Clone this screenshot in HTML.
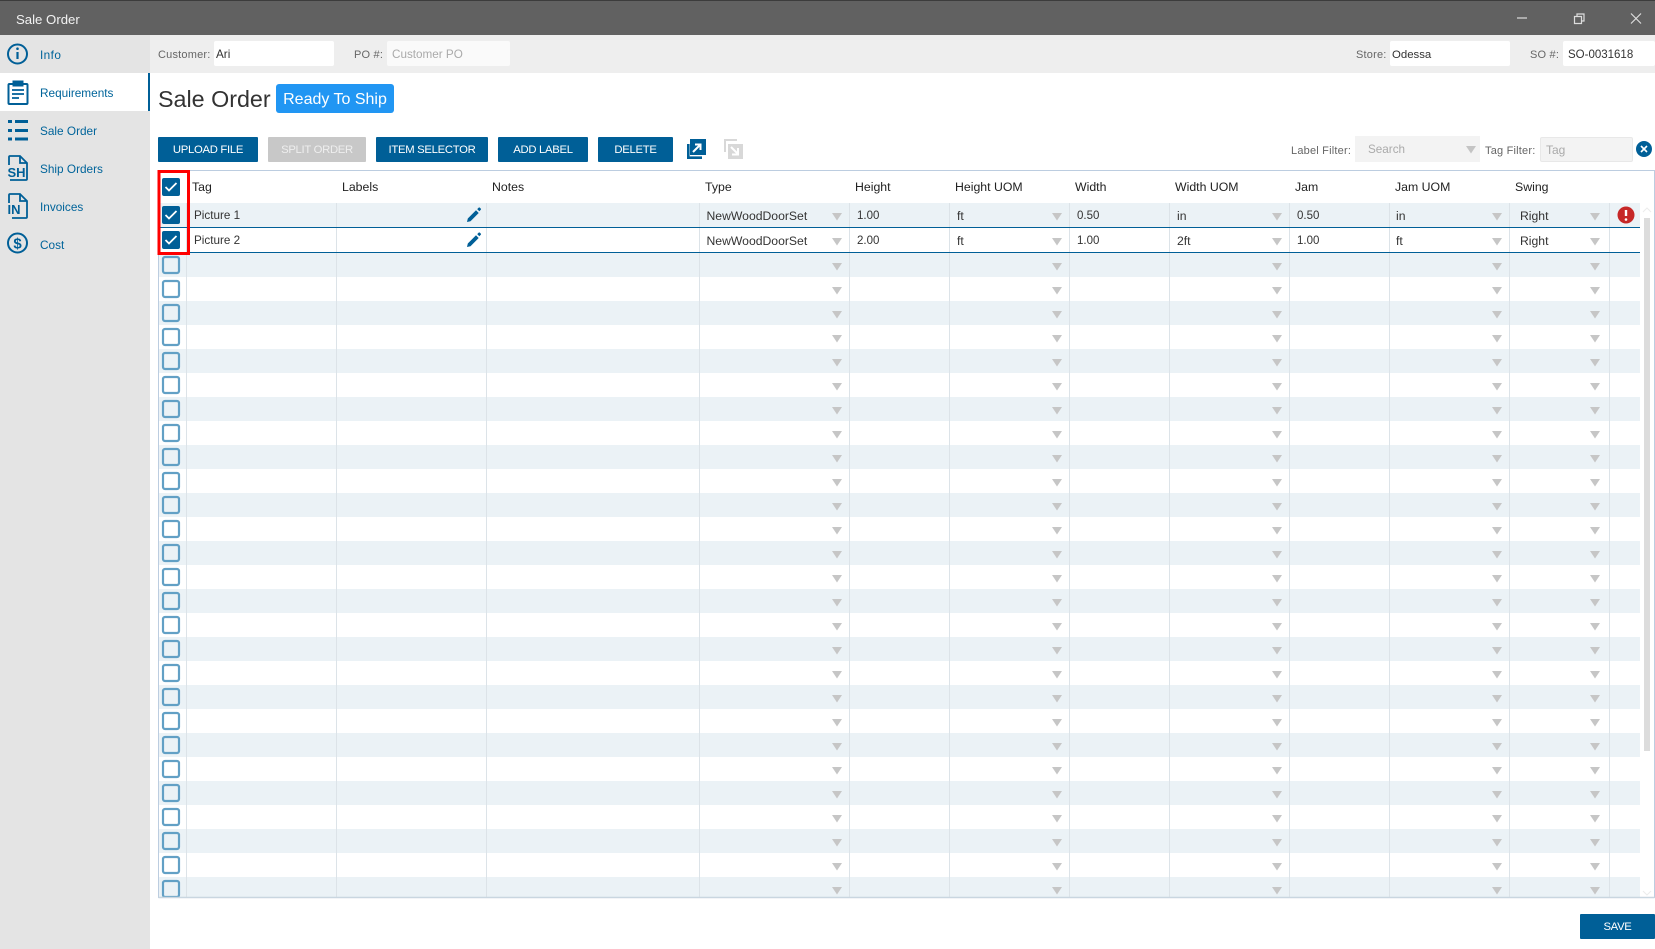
<!DOCTYPE html>
<html>
<head>
<meta charset="utf-8">
<title>Sale Order</title>
<style>
html,body{margin:0;padding:0;background:#fff}
#p{position:relative;width:1655px;height:949px;overflow:hidden;background:#fff;font-family:"Liberation Sans",sans-serif;font-size:12.5px;color:#333}
#p div{position:absolute;box-sizing:border-box}
.t{position:absolute;white-space:nowrap;line-height:16px;height:16px}
.n{left:40px;color:#00649a;font-size:11.8px}
.l{color:#666;font-size:11px;letter-spacing:.2px}
.h{top:179px;color:#222;font-size:12.3px}
.r1{top:208px;color:#333;font-size:12.2px}
.r2{top:233px;color:#333;font-size:12.2px}
.c{font-size:11.7px}
.i{background:#fff;border-radius:2px;height:25px;top:41px}
.b{top:137px;height:25px;background:#005f97;color:#fff;font-size:11.3px;letter-spacing:-.3px;line-height:27px;text-align:center;border-radius:1px}
</style>
</head>
<body>
<div id="p">
<div style="left:0;top:0;width:1655px;height:35px;background:#616161;border-top:1px solid #3c3c3c"></div>
<span class="t" style="left:16px;top:12px;color:#f2f2f2;font-size:13.2px">Sale Order</span>
<svg style="position:absolute;left:1510px;top:8px" width="140" height="20" fill="none" stroke="#ddd" stroke-width="1.2">
<path d="M7 10H17"/>
<path d="M64.500 8.500h7v7h-7z"/><path d="M67 8V6h7v7h-2"/>
<path d="M121 5.500l10 10M131 5.500l-10 10"/>
</svg>
<div style="left:0;top:35px;width:150px;height:914px;background:#e4e4e4"></div>
<div style="left:150px;top:35px;width:1505px;height:38px;background:#eee"></div>
<div style="left:0;top:73px;width:150px;height:38px;background:#fff;border-right:2px solid #005f97"></div>

<svg style="position:absolute;left:0;top:35px" width="40" height="230" fill="none" stroke="#005f97" stroke-width="2">
<circle cx="17.500" cy="19" r="9.500"/><path d="M17.500 17v7" stroke-width="2.200"/><circle cx="17.500" cy="13.700" r="1.300" fill="#005f97" stroke="none"/>
<path d="M13 49H9.500a1 1 0 0 0-1 1v18a1 1 0 0 0 1 1h17a1 1 0 0 0 1-1V50a1 1 0 0 0-1-1H23"/><rect x="13" y="46" width="10" height="5" fill="#005f97" stroke-width="1"/>
<path d="M12 55h12M12 59h12M12 63h7" stroke-width="1.700"/>
<path d="M8 86.500h4M15 86.500h13M8 95.500h4M15 95.500h13M8 104h4M15 104h13" stroke-width="3"/>
<path d="M9 130v-8a1 1 0 0 1 1-1h10l7 7v16a1 1 0 0 1-1 1H10M20 121v7h7" stroke-width="1.800"/>
<path d="M9 168v-8a1 1 0 0 1 1-1h10l7 7v16a1 1 0 0 1-1 1H12M20 159v7h7" stroke-width="1.800"/>
<circle cx="17.500" cy="208" r="9.500"/>
</svg>
<svg style="position:absolute;left:0;top:35px" width="40" height="230">
<text x="7.500" y="142" font-family="Liberation Sans" font-weight="700" font-size="13" fill="#005f97">SH</text>
<text x="7.500" y="179" font-family="Liberation Sans" font-weight="700" font-size="13" fill="#005f97">IN</text>
<text x="17.500" y="213.500" text-anchor="middle" font-family="Liberation Sans" font-size="15" font-weight="700" fill="#005f97">$</text>
</svg>
<span class="t n" style="top:47px;letter-spacing:.4px">Info</span>
<span class="t n" style="top:85px">Requirements</span>
<span class="t n" style="top:123px">Sale Order</span>
<span class="t n" style="top:161px">Ship Orders</span>
<span class="t n" style="top:199px">Invoices</span>
<span class="t n" style="top:237px">Cost</span>

<span class="t l" style="left:158px;top:47px">Customer:</span>
<div class="i" style="left:214px;width:120px"></div>
<span class="t c" style="left:216px;top:47px">Ari</span>
<span class="t l" style="left:354px;top:47px">PO #:</span>
<div class="i" style="left:387px;width:123px;background:#fafafa"></div>
<span class="t c" style="left:392px;top:47px;color:#aaa">Customer PO</span>
<span class="t l" style="left:1356px;top:47px">Store:</span>
<div class="i" style="left:1390px;width:120px"></div>
<span class="t c" style="left:1392px;top:47px;font-size:11.4px">Odessa</span>
<span class="t l" style="left:1530px;top:47px">SO #:</span>
<div class="i" style="left:1563px;width:92px"></div>
<span class="t c" style="left:1568px;top:47px;font-size:11.5px">SO-0031618</span>

<span class="t" style="left:158px;top:85px;height:28px;line-height:28px;font-size:23.300px;color:#333">Sale Order</span>
<div style="left:276px;top:84px;width:118px;height:29px;background:#2196f3;border-radius:3px;color:#fff;font-size:16px;line-height:32px;text-align:center">Ready To Ship</div>

<div class="b" style="left:158px;width:100px">UPLOAD FILE</div>
<div class="b" style="left:268px;width:98px;background:#c8c8c8;color:#eee">SPLIT ORDER</div>
<div class="b" style="left:376px;width:112px">ITEM SELECTOR</div>
<div class="b" style="left:498px;width:90px">ADD LABEL</div>
<div class="b" style="left:598px;width:75px">DELETE</div>
<svg style="position:absolute;left:685px;top:137px" width="64" height="25">
<path d="M5 2h16v16H5z" fill="#005f97"/>
<path d="M8 15l7-7M10 7.500h5.500V13" fill="none" stroke="#fff" stroke-width="2"/>
<path d="M3.300 7v13.700H17" fill="none" stroke="#005f97" stroke-width="2.600"/>
<path d="M39 2h13v2H41v11h-2z" fill="#d8d8d8"/>
<path d="M43 7h15v15H43z" fill="#d8d8d8"/>
<path d="M46 10l7 7M53 11v6.500h-6" fill="none" stroke="#fff" stroke-width="2"/>
</svg>

<span class="t l" style="left:1291px;top:143px">Label Filter:</span>
<div style="left:1355px;top:136px;width:125px;height:26px;background:#f3f3f3"></div>
<span class="t" style="left:1368px;top:142px;color:#aaa;font-size:11.700px">Search</span>
<svg style="position:absolute;left:1465px;top:145px" width="12" height="9"><path d="M1 1h10l-5 7.500z" fill="#c4c4c4"/></svg>
<span class="t l" style="left:1485px;top:143px">Tag Filter:</span>
<div style="left:1540px;top:137px;width:93px;height:25px;background:#f3f3f3;border:1px solid #e8e8e8;border-radius:2px"></div>
<span class="t" style="left:1546px;top:142px;color:#aaa;font-size:12px">Tag</span>
<svg style="position:absolute;left:1635px;top:140px" width="18" height="18"><circle cx="9" cy="9" r="8" fill="#005f97"/><path d="M6 6l6 6M12 6l-6 6" stroke="#fff" stroke-width="1.600"/></svg>

<!-- grid -->
<svg style="position:absolute;left:0;top:0" width="1655" height="949">
<defs>
<pattern id="st" patternUnits="userSpaceOnUse" x="0" y="253" width="1655" height="48">
<rect x="0" y="0" width="1655" height="24" fill="#ebf2f6"/>
</pattern>
<pattern id="ar" patternUnits="userSpaceOnUse" x="0" y="253" width="1655" height="24">
<path d="M832 10h10l-5 7.500zM1052 10h10l-5 7.500zM1272 10h10l-5 7.500zM1492 10h10l-5 7.500zM1590 10h10l-5 7.500z" fill="#c6c6c6"/>
</pattern>
<pattern id="cb" patternUnits="userSpaceOnUse" x="0" y="253" width="200" height="24">
<rect x="163" y="4" width="16" height="16" rx="2" fill="none" stroke="#62a0c5" stroke-width="2.200"/>
</pattern>
</defs>
<rect x="159" y="203" width="1481" height="25" fill="#ebf2f6"/>
<rect x="159" y="253" width="1481" height="644" fill="url(#st)"/>
<path d="M186.500 203V897M336.500 203V897M486.500 203V897M699.500 203V897M849.500 203V897M949.500 203V897M1069.500 203V897M1169.500 203V897M1289.500 203V897M1389.500 203V897M1509.500 203V897M1609.500 203V897" stroke="#dce3e8" stroke-width="1"/>
<path d="M158 227.500H1640M158 252.500H1640" stroke="#005f97" stroke-width="1"/>
<rect x="0" y="253" width="1655" height="644" fill="url(#ar)"/>
<path d="M832 213h10l-5 7.500zM1052 213h10l-5 7.500zM1272 213h10l-5 7.500zM1492 213h10l-5 7.500zM1590 213h10l-5 7.500zM832 238h10l-5 7.500zM1052 238h10l-5 7.500zM1272 238h10l-5 7.500zM1492 238h10l-5 7.500zM1590 238h10l-5 7.500z" fill="#c6c6c6"/>
<rect x="0" y="253" width="200" height="644" fill="url(#cb)"/>
<path d="M158.500 170.500H1654.500V897.500H158.500z" fill="none" stroke="#bccde0" stroke-width="1"/>
<path d="M158.500 897.500H1654.500" stroke="#c9d6e0" stroke-width="1.500"/>
<rect x="1644" y="218" width="6" height="533" fill="#dcdcdc"/>
<path d="M1643 212l4-4 4 4M1643 891l4 4 4-4" fill="none" stroke="#ececec" stroke-width="1"/>
<rect x="162" y="178" width="18" height="18" rx="2" fill="#005f97"/>
<rect x="162" y="206" width="18" height="18" rx="2" fill="#005f97"/>
<rect x="162" y="231" width="18" height="18" rx="2" fill="#005f97"/>
<path d="M165.500 187l3.500 3.500 7.500-7.500M165.500 215l3.500 3.500 7.500-7.500M165.500 240l3.500 3.500 7.500-7.500" fill="none" stroke="#fff" stroke-width="1.800"/>
<path d="M159 171.500h29.500v82h-29.500z" fill="none" stroke="#f00" stroke-width="3"/>
<path d="M467 222l.8-3.500 8.200-8.200 2.700 2.700-8.200 8.200zM477.200 209.100l1.500-1.500a.8.8 0 0 1 1.100 0l1 1a.8.8 0 0 1 0 1.100l-1.500 1.500z" fill="#005f97"/>
<path d="M467 247l.8-3.500 8.200-8.200 2.700 2.700-8.200 8.200zM477.200 234.100l1.500-1.500a.8.8 0 0 1 1.100 0l1 1a.8.8 0 0 1 0 1.100l-1.500 1.500z" fill="#005f97"/>
<circle cx="1626" cy="215" r="8.500" fill="#c62828"/>
<path d="M1626 210v6" stroke="#fff" stroke-width="2.400"/><circle cx="1626" cy="219.500" r="1.300" fill="#fff"/>
</svg>

<span class="t h" style="left:192px">Tag</span>
<span class="t h" style="left:342px">Labels</span>
<span class="t h" style="left:492px">Notes</span>
<span class="t h" style="left:705px">Type</span>
<span class="t h" style="left:855px">Height</span>
<span class="t h" style="left:955px">Height UOM</span>
<span class="t h" style="left:1075px">Width</span>
<span class="t h" style="left:1175px">Width UOM</span>
<span class="t h" style="left:1295px">Jam</span>
<span class="t h" style="left:1395px">Jam UOM</span>
<span class="t h" style="left:1515px">Swing</span>

<span class="t r1" style="left:194px;font-size:11.7px">Picture 1</span>
<span class="t r1" style="left:706.500px">NewWoodDoorSet</span>
<span class="t r1" style="left:857px;font-size:11.5px">1.00</span>
<span class="t r1" style="left:957px">ft</span>
<span class="t r1" style="left:1077px;font-size:11.5px">0.50</span>
<span class="t r1" style="left:1177px">in</span>
<span class="t r1" style="left:1297px;font-size:11.5px">0.50</span>
<span class="t r1" style="left:1396px">in</span>
<span class="t r1" style="left:1520px">Right</span>

<span class="t r2" style="left:194px;font-size:11.7px">Picture 2</span>
<span class="t r2" style="left:706.500px">NewWoodDoorSet</span>
<span class="t r2" style="left:857px;font-size:11.5px">2.00</span>
<span class="t r2" style="left:957px">ft</span>
<span class="t r2" style="left:1077px;font-size:11.5px">1.00</span>
<span class="t r2" style="left:1177px">2ft</span>
<span class="t r2" style="left:1297px;font-size:11.5px">1.00</span>
<span class="t r2" style="left:1396px">ft</span>
<span class="t r2" style="left:1520px">Right</span>

<div class="b" style="left:1580px;top:914px;width:75px">SAVE</div>
</div>
</body>
</html>
